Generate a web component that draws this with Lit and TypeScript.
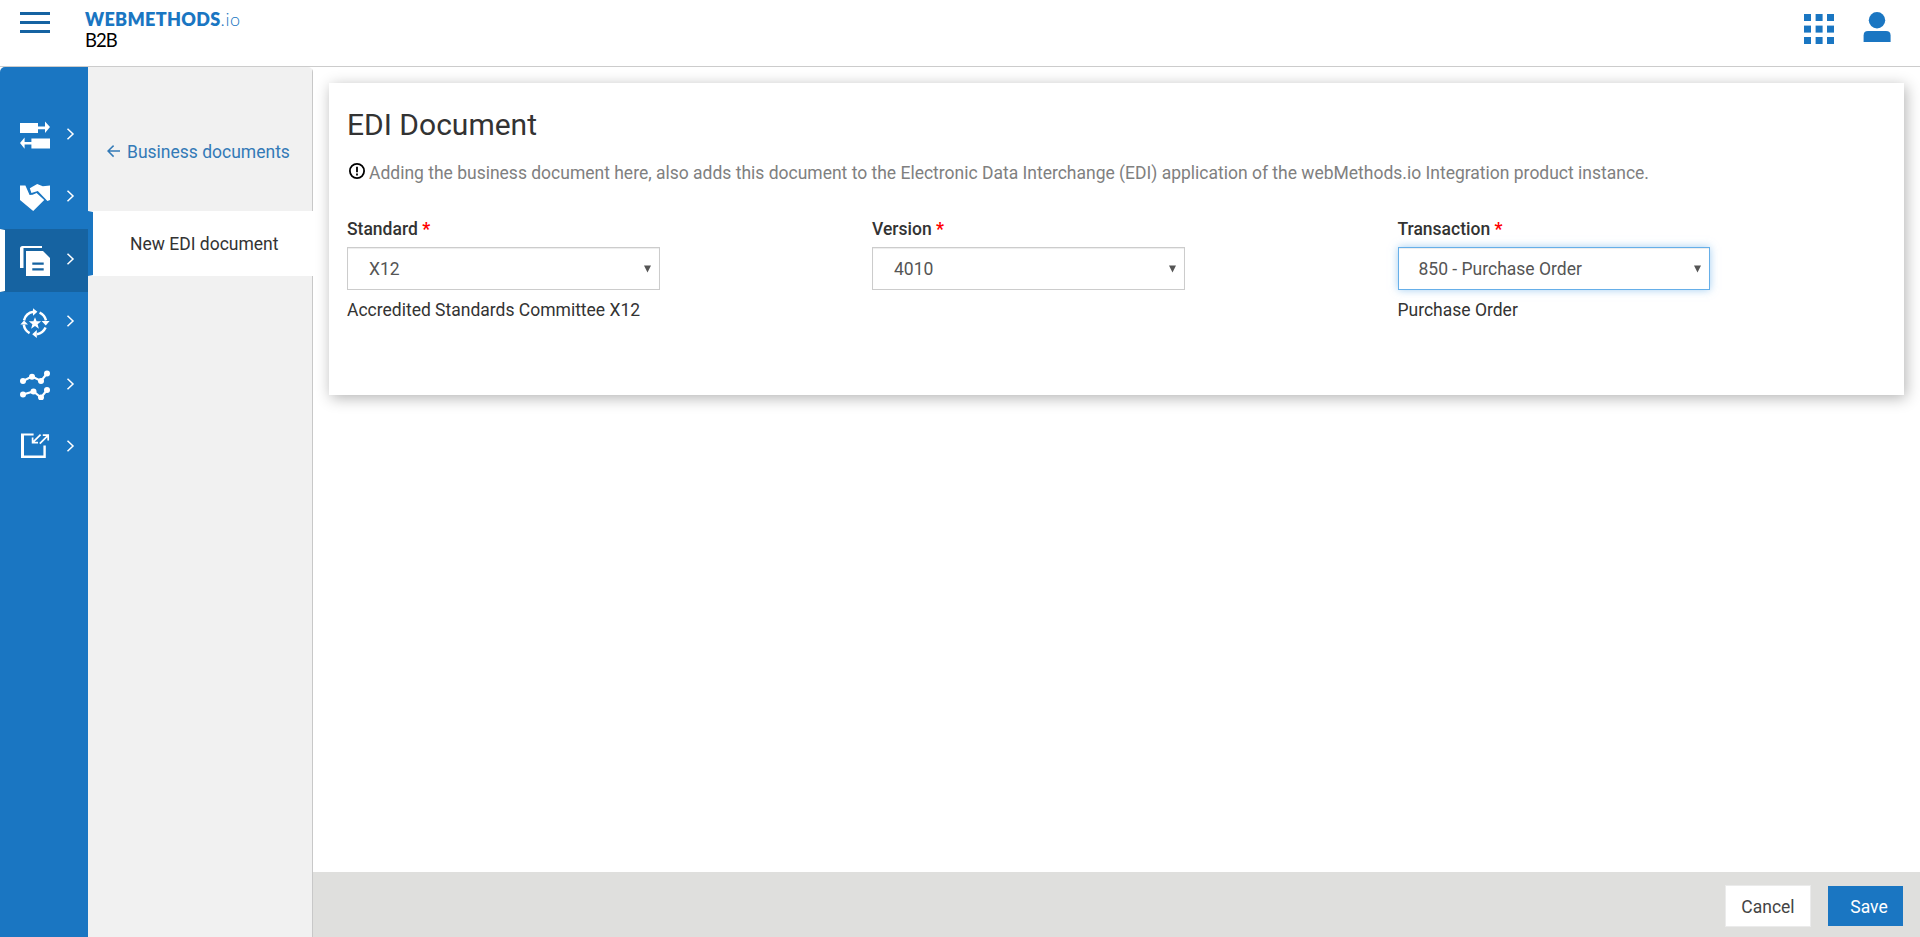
import { LitElement, html, svg, css } from "lit";
import { customElement } from "lit/decorators.js";
import { classMap } from "lit/directives/class-map.js";

const navIcons = [
  {
    active: false,
    art: svg`<path d="M0 2h18v3.6h7V0.6L30 6l-5 6V8.2h-7V12H0zM30 17.6v10H11.4v-4.2H4.6v4.4L0 22l4.6-5.4v4.4h6.8v-3.4z" transform="translate(0 1)"/>`,
  },
  {
    active: false,
    art: svg`<path d="M0 2.5h5.4L9.6 12l3-.2 4-1.8 7.6 7-11 11L0 17z"/><path d="M9.8 5.2 17.2 1l5.6 2.2 7.2-.6V17l-2.6 1-9.6-10-6.4 2z"/>`,
  },
  {
    active: true,
    art: svg`<path d="M2.5 0H22v2H3.5v20H0V2.5Q0 0 2.5 0z"/><path d="M6 5h17l7 7v18H6z"/><path class="cut" d="M12.3 16.4h11.4v2.3H12.3zM12.3 22.2h11.4v2.3H12.3z"/>`,
  },
  {
    active: false,
    art: svg`<g class="line heavy"><path d="M4 12.4A11.6 11.6 0 0 1 13.6 3.8M19.6 4.6A11.6 11.6 0 0 1 26 12.4M25.6 19.6A11.6 11.6 0 0 1 17 26.2M9.6 25.2A11.6 11.6 0 0 1 3.8 16.6"/></g><path d="M13 0.2 17.4 3.8l-4.4 4zM29.6 13 25.8 17.4 21.6 13zM16.8 22v8L12.2 26.2zM0.4 16.6 4 12.4 8 16.6z"/><path d="M15 9.2l1.6 4.1h4.6l-3.6 2.9 1.3 4.5L15 18l-3.9 2.7 1.3-4.5-3.6-2.9h4.6z"/>`,
  },
  {
    active: false,
    art: svg`<g class="line"><path d="M3 11 12 6.5 21 11 27 3.5M3 24.5 13.5 21.5 21 27.5 27 20"/></g><circle cx="3" cy="11" r="3"/><circle cx="12" cy="6.7" r="3"/><circle cx="21" cy="11" r="3"/><circle cx="27" cy="3.5" r="3"/><circle cx="3" cy="24.6" r="3"/><circle cx="13.5" cy="21.6" r="3"/><circle cx="21" cy="27.4" r="3"/><circle cx="27" cy="20" r="3"/>`,
  },
  {
    active: false,
    art: svg`<g transform="translate(0 -2)"><path d="M1 2.5h12.6v2H4v20h19.4V14.6h2.4V27H1z"/><g class="thin"><path d="M20.6 3.6 12.8 11.4M12.6 6.4v5.2h5.4M19.8 12.6 28 4.4M22.8 4.2h5.4v5.2"/></g></g>`,
  },
];

const fields = [
  { label: "Standard", value: "X12", hint: "Accredited Standards Committee X12", focus: false },
  { label: "Version", value: "4010", hint: "", focus: false },
  { label: "Transaction", value: "850 - Purchase Order", hint: "Purchase Order", focus: true },
];

@customElement("app-root")
export class AppRoot extends LitElement {
  static styles = css`
    :host {
      display: flex;
      flex-direction: column;
      height: 937px;
      overflow: hidden;
      background: #fff;
      color: #333;
      font: 17.5px/26px Roboto, sans-serif;
    }
    * { box-sizing: border-box; }
    svg { display: block; }
    .header {
      display: flex;
      height: 67px;
      flex: none;
      border-bottom: 1px solid #ccc;
      padding: 12px 29px 0 20px;
    }
    .burger { width: 30px; height: 22px; flex: none; fill: #1563a2; }
    .brand { margin: -1px 0 0 35px; font-family: Lato, sans-serif; }
    .name {
      height: 17px;
      font-size: 18px;
      line-height: 17px;
      font-weight: 800;
      color: #1a76c2;
      letter-spacing: 0.32px;
      white-space: nowrap;
    }
    .name span { font-weight: 300; letter-spacing: 0.6px; }
    .product { font-size: 18.5px; line-height: 20px; font-weight: 400; color: #000; margin-top: 2px; letter-spacing: -1px; }
    .tools { margin-left: auto; display: flex; gap: 29px; fill: #1a76c2; }
    .apps { margin-top: 2px; }
    .body { display: flex; flex: 1; min-height: 0; }
    .nav { width: 88px; background: #1a76c2; border-top-left-radius: 5px; padding-top: 37px; flex: none; }
    .item { height: 62.5px; display: flex; align-items: center; padding-left: 20px; gap: 16px; }
    .active { background: #1663a1; padding-left: 15px; border: 0 solid #1663a1; border-width: 1px 0 1px 5px; border-left-color: #fff; }
    .icon { fill: #fff; flex: none; }
    .active .icon { margin-top: 1px; }
    .line { fill: none; stroke: #fff; stroke-width: 2.1; }
    .heavy { stroke-width: 2.5; }
    .thin { fill: none; stroke: #fff; stroke-width: 1.7; }
    .cut { fill: #1663a1; }
    .chev { fill: none; stroke: #fff; stroke-width: 1.5; margin-bottom: 3px; }
    .side {
      width: 225px;
      flex: none;
      background: linear-gradient(90deg, #f1f1f1 224px, #c8c8c8 224px);
      border-top-right-radius: 5px;
      padding-top: 72px;
    }
    .back { display: flex; height: 26px; align-items: center; padding-left: 19px; color: #337ab7; margin-bottom: 46px; white-space: nowrap; }
    .back svg { fill: none; stroke: #337ab7; stroke-width: 1.5; margin: 0 6px 2px 0; }
    .current { height: 65px; background: #fff; border: 0 solid #fff; border-width: 1px 0 1px 5px; border-left-color: #1a76c2; padding: 19px 0 0 37px; white-space: nowrap; }
    .main { flex: 1; display: flex; flex-direction: column; padding-top: 16px; }
    .card { margin: 0 16px; height: 312px; background: #fff; box-shadow: 2px 3px 14px rgba(0, 0, 0, 0.3); padding: 24px 0 0 18px; }
    .title { margin: 0; font-size: 30px; line-height: 36px; font-weight: 400; }
    .note { display: flex; margin-top: 17px; color: #808080; white-space: nowrap; }
    .note svg { margin: 3px 4px 0 2px; fill: none; stroke: #000; stroke-width: 1.8; }
    .note span { letter-spacing: -0.004px; }
    .fields { display: grid; grid-template-columns: 525px 525.5px 1fr; margin-top: 30px; }
    .label { font-weight: 500; line-height: 26px; }
    .label span { color: #f00; font-weight: 700; }
    .select {
      width: 313px;
      height: 43px;
      margin-top: 5px;
      border: 1px solid #ccc;
      box-shadow: inset 0 1px 1px rgba(0, 0, 0, 0.075);
      display: flex;
      align-items: center;
      justify-content: space-between;
      padding: 0 8px 0 21px;
      color: #555;
    }
    .select svg { fill: #555; }
    .focus { width: 312px; border-color: #66afe9; box-shadow: inset 0 1px 1px rgba(0, 0, 0, 0.075), 0 0 8px rgba(102, 175, 233, 0.6); padding-left: 20px; }
    .hint { margin-top: 7px; }
    .footer { margin-top: auto; height: 65px; background: #dfdfdd; display: flex; align-items: center; justify-content: flex-end; padding: 3px 17px 0 0; gap: 17px; }
    .cancel, .save { font: inherit; border: 0; border-radius: 0; }
    .cancel { width: 86px; height: 42px; background: #fff; border: 1px solid #ebebeb; color: #444; padding: 1px 0 0; }
    .save { width: 75px; height: 40px; background: #1a76c2; color: #fff; padding: 1px 0 0 7px; }
  `;

  render() {
    return html`
      <header class="header">
        <svg class="burger" viewBox="0 0 30 22"><path d="M0 0h30v3H0zM0 9h30v3H0zM0 18h30v3H0z" /></svg>
        <div class="brand">
          <div class="name">WEBMETHODS<span>.io</span></div>
          <div class="product">B2B</div>
        </div>
        <div class="tools">
          <svg class="apps" width="30" height="30" viewBox="0 0 30 30">
            ${[0, 11.6, 23].map((y) => [0, 11.6, 23].map((x) => svg`<rect x=${x} y=${y} width="7" height="7"/>`))}
          </svg>
          <svg width="28" height="30" viewBox="0 0 28 30">
            <circle cx="14" cy="8.2" r="8.2" /><path d="M.6 30v-6.6Q.6 19 5 19h18q4.6 0 4.6 4.4V30z" />
          </svg>
        </div>
      </header>
      <div class="body">
        <nav class="nav">
          ${navIcons.map(
            (n) => html`<div class=${classMap({ item: true, active: n.active })}>
              <svg class="icon" width="30" height="30" viewBox="0 0 30 30">${n.art}</svg>
              <svg class="chev" width="9" height="12" viewBox="0 0 9 12"><path d="M1.5.8 7 6l-5.5 5.2" /></svg>
            </div>`
          )}
        </nav>
        <aside class="side">
          <div class="back">
            <svg width="14" height="13" viewBox="0 0 14 13"><path d="M13 6H1M6.6.6 1 6l5.6 5.6" /></svg>
            Business documents
          </div>
          <div class="current">New EDI document</div>
        </aside>
        <main class="main">
          <section class="card">
            <h1 class="title">EDI Document</h1>
            <div class="note">
              <svg width="16" height="16" viewBox="0 0 16 16"><circle cx="8" cy="8" r="7.1" /><path d="M8 3.8v5.4M8 10.6v1.8" /></svg>
              <span>Adding the business document here, also adds this document to the Electronic Data Interchange (EDI) application of the webMethods.io Integration product instance.</span>
            </div>
            <div class="fields">
              ${fields.map(
                (f) => html`<div>
                  <div class="label">${f.label} <span>*</span></div>
                  <div class=${classMap({ select: true, focus: f.focus })}>
                    ${f.value}<svg width="7" height="8" viewBox="0 0 7 8"><path d="M0 .6h7L3.5 7.6z" /></svg>
                  </div>
                  <div class="hint">${f.hint}</div>
                </div>`
              )}
            </div>
          </section>
          <footer class="footer">
            <button class="cancel">Cancel</button>
            <button class="save">Save</button>
          </footer>
        </main>
      </div>
    `;
  }
}
